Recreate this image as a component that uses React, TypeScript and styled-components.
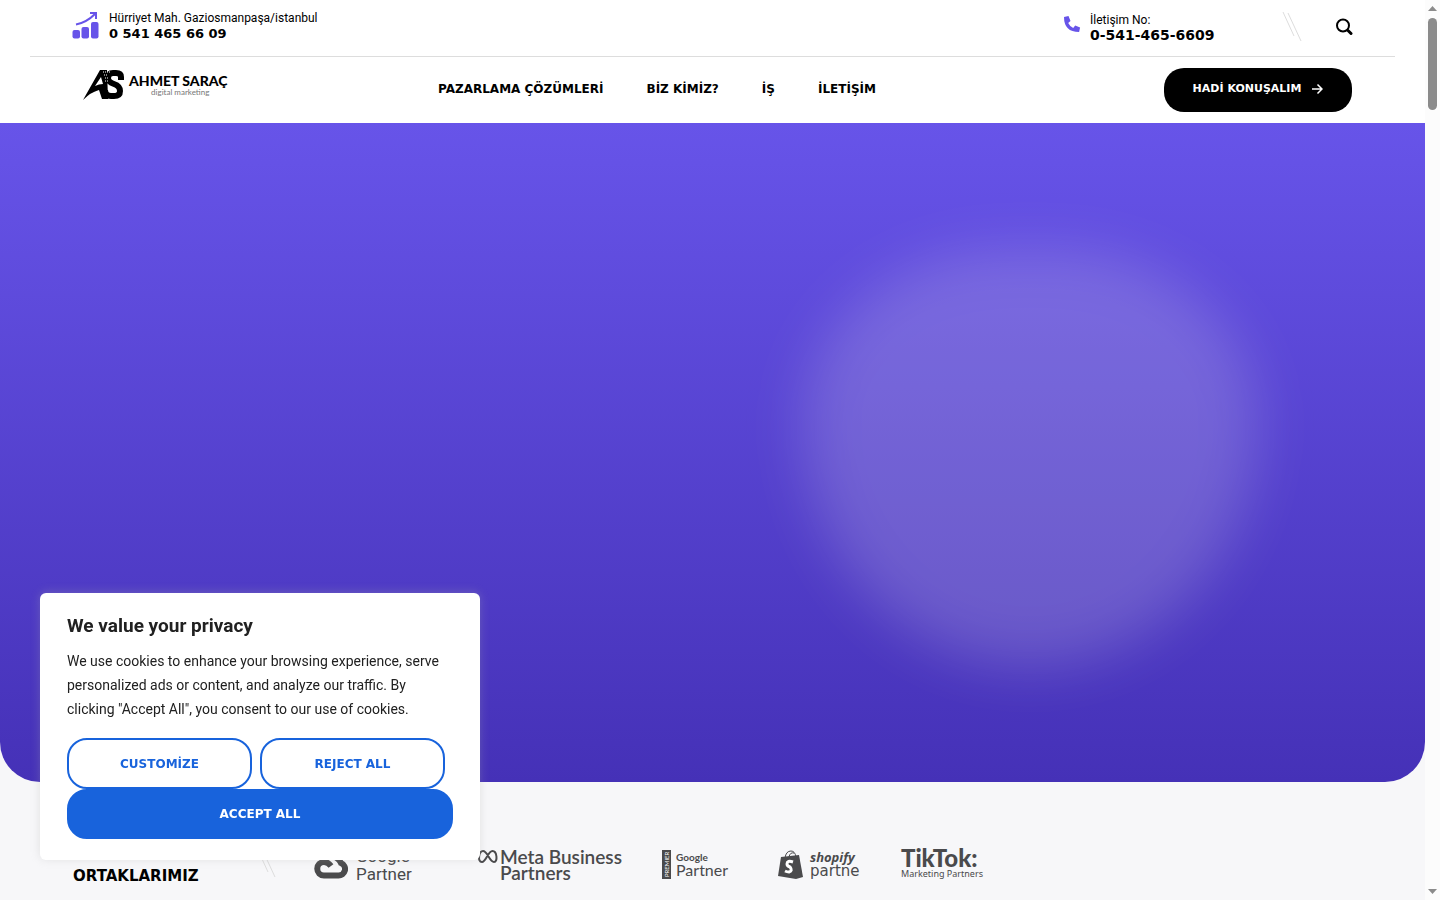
import React from 'react';
import styled, { createGlobalStyle } from 'styled-components';

const wide = '"DejaVu Sans", sans-serif';
const body = 'Roboto, "Liberation Sans", sans-serif';
const geo = 'Lato, sans-serif';

const Global = createGlobalStyle`
  * { box-sizing: border-box; }
  body { margin: 0; background: #fff; color: #000; font-family: ${body}; }
  a { color: inherit; text-decoration: none; }
  button { font: inherit; cursor: pointer; }
`;

const Shell = styled.div`
  display: grid;
  grid-template-columns: minmax(0, 1fr) 15px;
  height: 100vh;
  overflow: hidden;
`;
const Page = styled.div`
  display: flex;
  flex-direction: column;
  min-width: 0;
  overflow: hidden;
  background: #f7f7f9;
`;
const Header = styled.header`
  flex: none;
  background: #fff;
`;
const TopBar = styled.div`
  display: flex;
  align-items: flex-start;
  justify-content: space-between;
  height: 57px;
  margin: 0 30px;
  padding: 10px 42px 0;
  border-bottom: 1px solid #ddd;
`;
const Contact = styled.div`
  display: flex;
  gap: 9px;
`;
const ContactText = styled.div`
  min-width: 129px;
  font-size: 12px;
  line-height: 16px;
`;
const Phone = styled.a<{ $large?: boolean }>`
  display: block;
  font: bold ${p => (p.$large ? 14 : 13)}px/15px ${wide};
`;
const TopRight = styled.div`
  display: flex;
  align-items: flex-start;
  padding-top: 2px;
`;
const Slash = styled.svg`
  flex: none;
`;
const SearchButton = styled.button`
  display: flex;
  margin: 6px 0 0 33px;
  padding: 0;
  border: 0;
  background: none;
`;
const Divider = styled.span`
  display: flex;
  margin-left: 63px;
`;
const MainBar = styled.div`
  display: grid;
  grid-template-columns: 366px 1fr auto;
  align-items: center;
  height: 66px;
  padding: 0 73px 0 72px;
`;
const Logo = styled.a`
  display: flex;
  align-items: center;
  gap: 4px;
  padding: 0 0 10px 10px;
`;
const LogoText = styled.span`
  display: flex;
  flex-direction: column;
  align-items: center;
  font: 900 14px/14px ${geo};
  small { font: 8px/8px ${geo}; color: #777; padding-left: 4px; }
`;
const Nav = styled.nav`
  display: flex;
  gap: 43px;
  padding-bottom: 2px;
  font: bold 12px/20px ${wide};
  white-space: nowrap;
`;
const TalkButton = styled.button`
  display: flex;
  align-items: center;
  justify-content: center;
  gap: 10px;
  width: 188px;
  height: 44px;
  padding-bottom: 3px;
  border: 0;
  border-radius: 20px;
  background: #000;
  color: #fff;
  && { font: bold 11px/16px ${wide}; }
  white-space: nowrap;
`;
const Hero = styled.section`
  flex: none;
  display: flex;
  justify-content: flex-end;
  height: 659px;
  padding: 127px 168px 0 0;
  border-radius: 0 0 40px 40px;
  background: linear-gradient(#6754e9, #4531b7);
`;
const Glow = styled.div`
  width: 454px;
  height: 416px;
  border-radius: 45% 45% 50% 50% / 41% 41% 59% 59%;
  background: rgba(255, 255, 240, 0.17);
  filter: blur(28px);
`;
const Partners = styled.section`
  display: flex;
  align-items: flex-start;
  padding: 58px 73px 0;
`;
const PartnersTitle = styled.h2`
  width: 183px;
  margin: 0;
  font: bold 15px/24px ${wide};
`;
const PartnersDivider = styled.span`
  display: flex;
  padding-top: 8px;
`;
const Brands = styled.div`
  display: grid;
  grid-template-columns: 163px 185px 116px 123px auto;
  align-items: center;
  padding: 7px 0 0 38px;
`;
const Brand = styled.div<{ $gap?: number; $center?: boolean }>`
  display: flex;
  align-items: ${p => (p.$center ? 'center' : 'flex-start')};
  gap: ${p => p.$gap || 4}px;
  color: #4a4a4c;
  white-space: nowrap;
`;
const BrandText = styled.div<{ $size: number; $line: number; $weight?: number; $font?: string }>`
  font: ${p => p.$weight || 400} ${p => p.$size}px/${p => p.$line}px ${p => p.$font || geo};
`;
const Consent = styled.section`
  position: fixed;
  left: 40px;
  bottom: 40px;
  width: 440px;
  padding: 21px 27px;
  border-radius: 6px;
  background: #fff;
  color: #212121;
  box-shadow: 0 -1px 10px rgba(172, 171, 171, 0.3);
  h2 { margin: 0; font: bold 19px/24px ${body}; }
  p { margin: 11px 0 17px; font-size: 14px; line-height: 24px; }
`;
const Choices = styled.div`
  display: flex;
  flex-wrap: wrap;
  column-gap: 8px;
`;
const Choice = styled.button<{ $primary?: boolean }>`
  width: ${p => (p.$primary ? '386px' : '185px')};
  height: ${p => (p.$primary ? '50px' : '51px')};
  border: 2px solid #1863dc;
  border-radius: 20px;
  background: ${p => (p.$primary ? '#1863dc' : '#fff')};
  color: ${p => (p.$primary ? '#fff' : '#1863dc')};
  && { font: bold 12px/20px ${wide}; }
`;
const Rail = styled.div`
  display: flex;
  flex-direction: column;
  align-items: center;
  padding: 6px 0;
  background: #fcfcfc;
`;
const Thumb = styled.div`
  width: 9px;
  height: 92px;
  margin: 7px 0 auto;
  border-radius: 5px;
  background: #8b8b8b;
`;

const Lines = () => (
  <Slash width="20" height="30" fill="none" stroke="#ddd">
    <path d="M1 0 12 24M6 1 19 29" />
  </Slash>
);

export default function App() {
  return (
    <>
      <Global />
      <Shell>
        <Page>
          <Header>
            <TopBar>
              <Contact>
                <svg width="28" height="29" viewBox="0 0 28 29" fill="#6754e9">
                  <rect x="0.5" y="20" width="7.5" height="8.5" rx="2" />
                  <rect x="9.5" y="17" width="7.5" height="11.5" rx="2" />
                  <rect x="19" y="12" width="7.5" height="16.5" rx="2" />
                  <path d="M4 14.5C12 13 18 9 23 4M18 3h6v6" fill="none" stroke="#6754e9" strokeWidth="2" />
                </svg>
                <ContactText>Hürriyet Mah. Gaziosmanpaşa/istanbul<Phone href="tel:05414656609">0 541 465 66 09</Phone></ContactText>
              </Contact>
              <TopRight>
                <Contact>
                  <svg width="18" height="24" viewBox="0 0 18 24" fill="#6754e9">
                    <path d="M1 5 5.5 4l2 5-2.3 1.900q1.800 3.600 5 5l2-2.300 4.900 2-1 4.400Q1 20 1 5Z" />
                  </svg>
                  <ContactText>İletişim No:<Phone $large href="tel:05414656609">0-541-465-6609</Phone></ContactText>
                </Contact>
                <Divider><Lines /></Divider>
                <SearchButton aria-label="Ara">
                  <svg width="18" height="18" fill="none" stroke="#000" strokeWidth="2">
                    <circle cx="8" cy="7.5" r="6" /><path d="m13 12.500 3 3" strokeWidth="3" strokeLinecap="round" />
                  </svg>
                </SearchButton>
              </TopRight>
            </TopBar>
            <MainBar>
              <Logo href="#">
                <svg width="43" height="32" viewBox="0 0 43 32">
                  <path d="M1 31 18 1h7l1 29h-6l-3-9q-8 2-16 10ZM13 17q4-2 8-2L19 8Z" fillRule="evenodd" />
                  <path d="M39 11V8q0-4-5-4h-3q-5 0-5 5 0 4 6 6 6 2 6 7t-6 5h-3q-6 0-6-6" fill="none" stroke="#000" strokeWidth="6" />
                  <path d="M21 3h7M22 6h3M23 9h3M23 12h3" stroke="#fff" strokeDasharray="1 1" />
                </svg>
                <LogoText>AHMET SARAÇ<small>digital marketing</small></LogoText>
              </Logo>
              <Nav>
                <a href="#">PAZARLAMA ÇÖZÜMLERİ</a>
                <a href="#">BİZ KİMİZ?</a>
                <a href="#">İŞ</a>
                <a href="#">İLETİŞİM</a>
              </Nav>
              <TalkButton>
                HADİ KONUŞALIM
                <svg width="12" height="12" fill="none" stroke="#fff" strokeWidth="1.5"><path d="M1 6h10M6.500 1.500 11 6l-4.500 4.500" /></svg>
              </TalkButton>
            </MainBar>
          </Header>
          <Hero><Glow /></Hero>
          <Partners>
            <PartnersTitle>İŞ<br />ORTAKLARIMIZ</PartnersTitle>
            <PartnersDivider><Lines /></PartnersDivider>
            <Brands>
              <Brand $gap={8} $center>
                <svg width="34" height="30" viewBox="0 0 34 30" fill="none" stroke="#4a4a4c" strokeWidth="6">
                  <path d="M17 16q-3-4-7-4a6.500 6.500 0 0 0 0 13.500h14a6.500 6.500 0 0 0 3-12.500Q24 5 12 6" />
                </svg>
                <BrandText $size={17} $line={18} $font={body}>Google<br />Partner</BrandText>
              </Brand>
              <Brand $gap={2}>
                <svg width="21" height="15" fill="none" stroke="#4a4a4c" strokeWidth="2">
                  <path d="M6 2C2 2 0 13 5 13 9 13 11 2 15.500 2 20 2 21 13 17 13 12.500 13 10.500 2 6 2Z" />
                </svg>
                <BrandText $size={19} $line={16} $weight={600}>Meta Business<br />Partners</BrandText>
              </Brand>
              <Brand>
                <svg width="10" height="30"><rect width="9" height="29" fill="#4a4a4c" /><text transform="translate(7 27) rotate(-90)" fontSize="6" fill="#fff" fontFamily="Lato">PREMIER</text></svg>
                <BrandText $size={10} $line={14} $weight={700}>Google<BrandText $size={16} $line={12}>Partner</BrandText></BrandText>
              </Brand>
              <Brand>
                <svg width="28" height="30" fill="#4a4a4c"><path d="m3 7 18-2 4 22-7 2L0 26Z" /><path d="M7 8q1-7 6-7 4 0 5 6M11 7q1-5 5-4" fill="none" stroke="#4a4a4c" /><path d="M15 12q-6-2-6 2 0 2 3 3 3 4-1 5-2 0-4-1" fill="none" stroke="#fff" strokeWidth="3" /></svg>
                <BrandText $size={13} $line={14} $weight={700} $font={'"Open Sans", sans-serif'}><i>shopify</i><BrandText $size={15} $line={14} $font={wide}>partne</BrandText></BrandText>
              </Brand>
              <Brand>
                <BrandText $size={24} $line={17} $weight={900}>TikTok:<BrandText $size={9} $line={16} $font={'"Noto Sans", sans-serif'}>Marketing Partners</BrandText></BrandText>
              </Brand>
            </Brands>
          </Partners>
        </Page>
        <Rail>
          <svg width="9" height="5" fill="#8b8b8b"><path d="M0 5 4.500 0 9 5Z" /></svg>
          <Thumb />
          <svg width="9" height="5" fill="#8b8b8b"><path d="M0 0h9L4.500 5Z" /></svg>
        </Rail>
      </Shell>
      <Consent aria-label="Cookie consent">
        <h2>We value your privacy</h2>
        <p>We use cookies to enhance your browsing experience, serve personalized ads or content, and analyze our traffic. By clicking "Accept All", you consent to our use of cookies.</p>
        <Choices>
          <Choice>CUSTOMİZE</Choice>
          <Choice>REJECT ALL</Choice>
          <Choice $primary>ACCEPT ALL</Choice>
        </Choices>
      </Consent>
    </>
  );
}
